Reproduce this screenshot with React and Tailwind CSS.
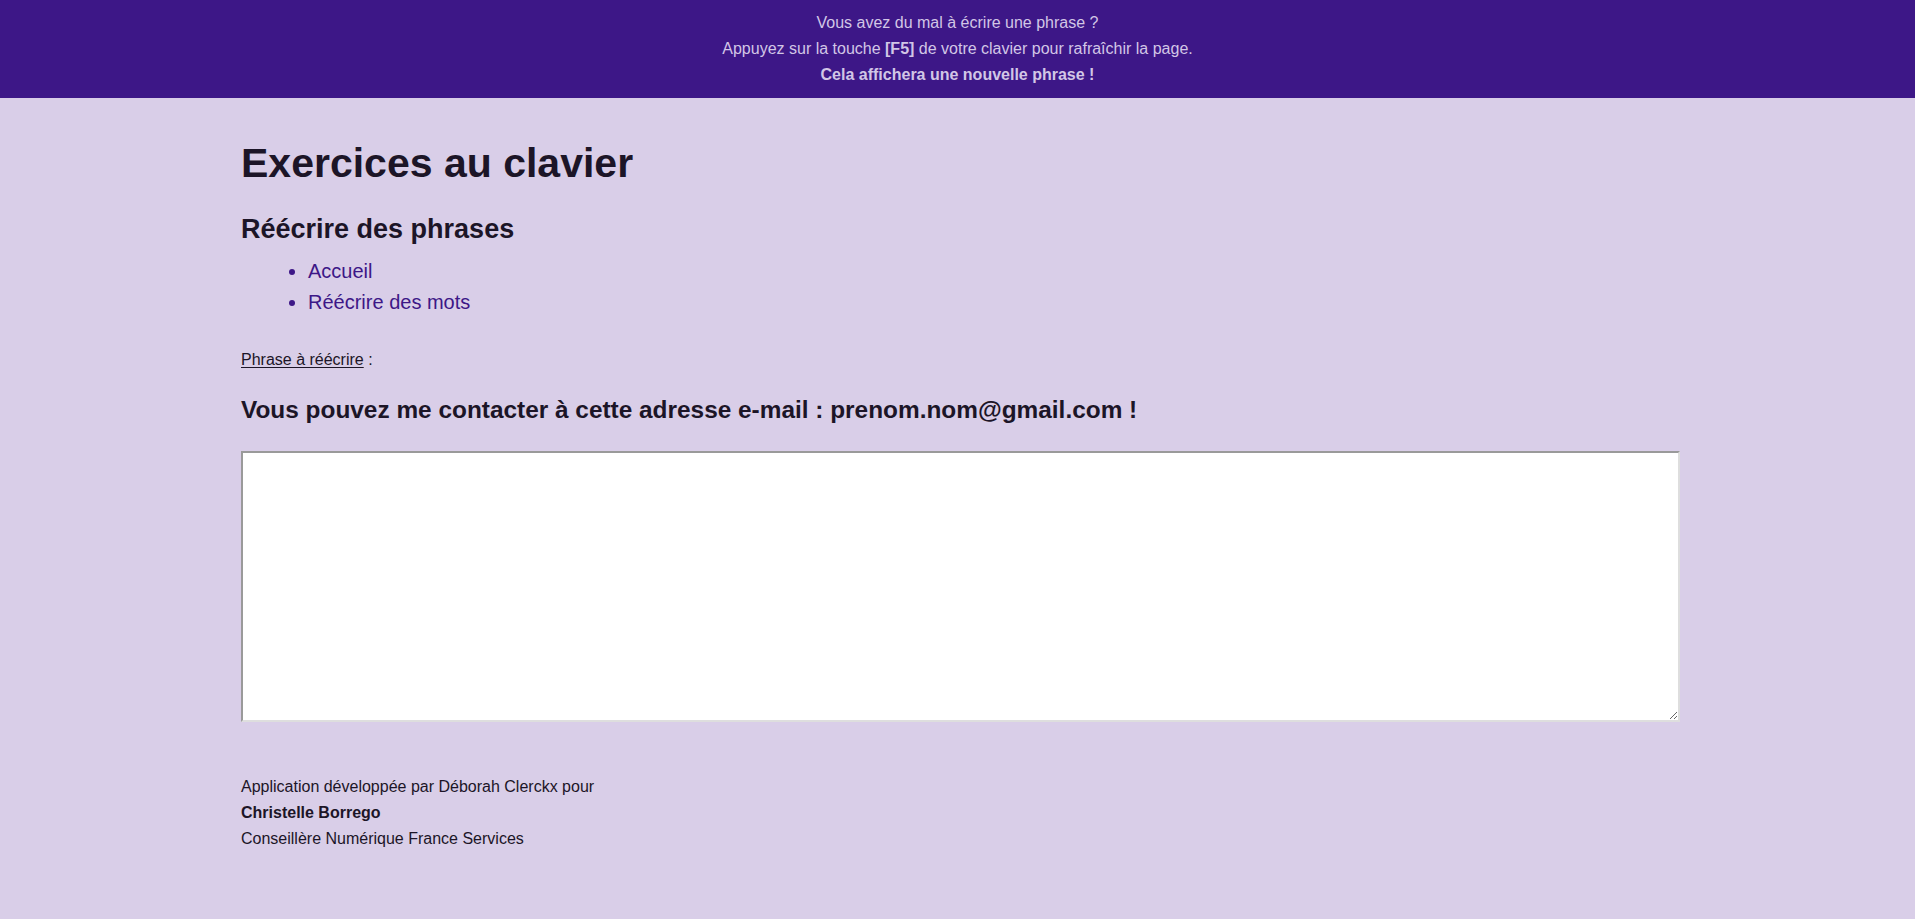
export default function App() {
  return (
    <div className="min-h-[919px] bg-[#d9cee8] font-['Liberation_Sans',Arial,sans-serif] text-[#1c1527]">
      {/* Top banner */}
      <header className="bg-[#3d1787] py-[10px] text-center text-[16px] leading-[26px] text-[#d2c6e6]">
        <p>Vous avez du mal à écrire une phrase ?</p>
        <p>
          Appuyez sur la touche <strong>[F5]</strong> de votre clavier pour rafraîchir la page.
        </p>
        <p className="font-bold">Cela affichera une nouvelle phrase !</p>
      </header>

      <main className="pl-[241px] pr-[235px]">
        <h1 className="mt-[42px] text-[41px] font-bold leading-[46px]">Exercices au clavier</h1>
        <h2 className="mt-[28px] text-[27px] font-bold leading-[30px]">Réécrire des phrases</h2>

        <ul className="mt-[12px] list-disc pl-[67px] text-[20px] leading-[31px] text-[#3d1787] marker:text-[#3d1787]">
          <li>
            <a href="#">Accueil</a>
          </li>
          <li>
            <a href="#">Réécrire des mots</a>
          </li>
        </ul>

        <p className="mt-[29px] text-[16px] leading-[26px]">
          <span className="underline underline-offset-2">Phrase à réécrire</span> :
        </p>
        <p className="mt-[23px] text-[24.4px] font-bold leading-[28px]">
          Vous pouvez me contacter à cette adresse e-mail : prenom.nom@gmail.com !
        </p>

        <textarea
          className="mt-[27px] block h-[271px] w-full border-2 border-t-[#9a9a9a] border-l-[#9a9a9a] border-r-[#dedede] border-b-[#dedede] bg-white outline-none"
          aria-label="Réécrire la phrase"
        />

        <footer className="mt-[52px] pb-[40px] text-[16px] leading-[26px]">
          <p>Application développée par Déborah Clerckx pour</p>
          <p className="font-bold">Christelle Borrego</p>
          <p>Conseillère Numérique France Services</p>
        </footer>
      </main>
    </div>
  )
}
